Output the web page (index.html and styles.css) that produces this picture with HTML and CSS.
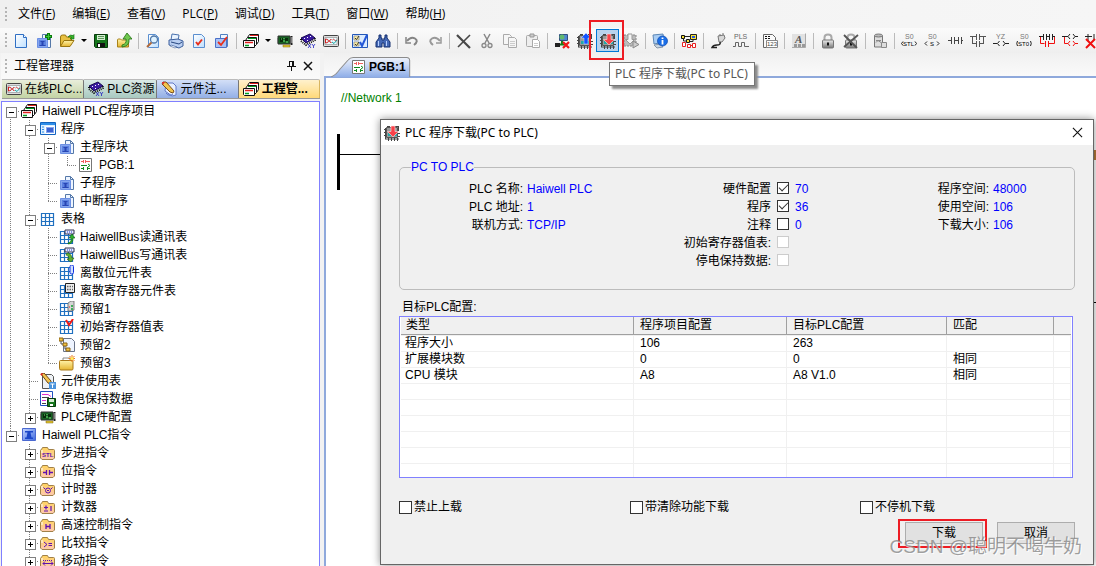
FILE: index.html
```html
<!DOCTYPE html>
<html lang="zh-CN">
<head>
<meta charset="utf-8">
<title>PLC 程序下载</title>
<link rel="stylesheet" href="styles.css">
</head>
<body>
<svg class="defs" aria-hidden="true">
  <defs>
    <linearGradient id="gBlue" x1="0" y1="0" x2="1" y2="1"><stop offset="0" stop-color="#c4d6ff"/><stop offset="1" stop-color="#3f6ae0"/></linearGradient>
    <linearGradient id="gPage" x1="0" y1="0" x2="1" y2="1"><stop offset="0" stop-color="#fff"/><stop offset="1" stop-color="#bfe0ff"/></linearGradient>
    <linearGradient id="gFold" x1="0" y1="0" x2="0" y2="1"><stop offset="0" stop-color="#fff3a8"/><stop offset="1" stop-color="#e5b530"/></linearGradient>
    <linearGradient id="gDir" x1="0" y1="0" x2="0" y2="1"><stop offset="0" stop-color="#ffd45e"/><stop offset="1" stop-color="#ffc9b0"/></linearGradient>
    <linearGradient id="gGray" x1="0" y1="0" x2="0" y2="1"><stop offset="0" stop-color="#eee"/><stop offset="1" stop-color="#777"/></linearGradient>
  </defs>
  <symbol id="new" viewBox="0 0 16 16"><path d="M2.500 1.500h8l3 3v10h-11z" fill="url(#gPage)" stroke="#2f6fc4"/><path d="M10.500 1.500v3h3" fill="#fff" stroke="#2f6fc4"/></symbol>
  <symbol id="blk" viewBox="0 0 16 16"><path d="M6.500 1.500h5l3 3v10h-8z" fill="#eef5ff" stroke="#5578a8"/><path d="M11.500 1.500v3h3" fill="none" stroke="#5578a8"/><path d="M1.500 5.500h10v9h-10z" fill="#86a6ee" stroke="#6c90e4"/><path d="M3 7h7v6H3z" fill="#5c82e0"/><path d="M4.500 8h4v1h-1v3h2v1h-6v-1h2V9h-1z" fill="#2846b4"/></symbol>
  <symbol id="blkadd" viewBox="0 0 16 16"><use href="#blk"/><path d="M12.500 0v7M9 3.500h7" stroke="#0a7a0a" stroke-width="3"/><path d="M12.500 1v5M10 3.500h5" stroke="#38c838"/></symbol>
  <symbol id="open" viewBox="0 0 16 16"><path d="M1.500 13V4q0-2 2-2h3l1 2h5v3" fill="#e8c040" stroke="#9a7610"/><path d="M1.500 13.500L5 7.500h10l-4 6z" fill="url(#gFold)" stroke="#9a7610"/><path d="M9 4q2-3 5-1.500l1-1V6h-4l1.500-1.500Q11 3.500 9 4z" fill="#36b52c" stroke="#12680c" stroke-width=".6"/></symbol>
  <symbol id="save" viewBox="0 0 16 16"><path d="M1.500 1.500h13v13h-12l-1-1z" fill="#16761c" stroke="#073a0b"/><path d="M4 2h8v5H4z" fill="#d6ecd4"/><path d="M5 3.500h6M5 5.500h6" stroke="#5a9a58"/><path d="M4 10h8v4H4z" fill="#111"/><path d="M5 11h2v3H5z" fill="#fff"/></symbol>
  <symbol id="export" viewBox="0 0 16 16"><path d="M1.500 14V7q0-1 1-1h2l1 1h7v7z" fill="url(#gFold)" stroke="#a98218"/><path d="M6 12q5-1 4-6H7l4-6 5 6h-3q1 7-7 8z" fill="#70c850" stroke="#217010" stroke-width=".8"/></symbol>
  <symbol id="preview" viewBox="0 0 16 16"><path d="M3.500 1.500h7l3 3v10h-10z" fill="url(#gPage)" stroke="#5a8fd0"/><circle cx="9" cy="6.500" r="3.500" fill="#dff2ff" stroke="#5078a8" stroke-width="1.300"/><path d="M6.500 9.500L2 14" stroke="#b06a3a" stroke-width="2"/></symbol>
  <symbol id="print" viewBox="0 0 16 16"><path d="M4 1l7 1-1 6-7-1z" fill="#eaf4ff" stroke="#4a72ae"/><path d="M1 7l9-1 5 2v5l-4 2-10-3z" fill="#b9cff2" stroke="#3c5f9c"/><path d="M3 9l8 2 3-2" fill="none" stroke="#27467e"/><path d="M3 12l6 2-2 1-5-2z" fill="#fff" stroke="#3c5f9c" stroke-width=".6"/></symbol>
  <symbol id="chk" viewBox="0 0 16 16"><path d="M2.500 1.500h8l3 3v10h-11z" fill="url(#gPage)" stroke="#5a8fd0"/><path d="M5 9l2 2.500L11 6.500" fill="none" stroke="#e8301c" stroke-width="2"/></symbol>
  <symbol id="chkblk" viewBox="0 0 16 16"><path d="M6.500 1.500h7v12h-7z" fill="#eef5ff" stroke="#5080c0"/><path d="M1.500 5.500h11v9h-11z" fill="#a9c1f5" stroke="#4a70c8"/><path d="M4 9l3 3 6-8" fill="none" stroke="#e8301c" stroke-width="1.800"/></symbol>
  <symbol id="stack" viewBox="0 0 16 16"><path d="M4.500 4.500l2-3h9v7l-2 3z" fill="#fff" stroke="#111"/><path d="M7 2.500h8" stroke="#e02020"/><path d="M2.500 7.500l2-3h9v7l-2 2z" fill="#fff" stroke="#111"/><path d="M5 5.500h8" stroke="#00a020"/><path d="M.5 7.500h11v7h-10l-1-1z" fill="#fff" stroke="#111"/><path d="M2 9.500h8" stroke="#e02020" stroke-width="1.500"/><path d="M2 12.500h4" stroke="#00a020" stroke-width="1.500"/></symbol>
  <symbol id="card" viewBox="0 0 16 16"><path d="M1 3h12v8H1z" fill="#176022" stroke="#333"/><path d="M3 5h3v4H3zM8 5h3v3H8z" fill="#082c0c"/><path d="M4 6h1M6 8h2M9 9h2M7 5v1" stroke="#6fe070"/><path d="M14.500 3v9" stroke="#222" stroke-width="2"/><path d="M15 4v6" stroke="#ddd"/><path d="M6 12h7v2H6z" fill="#e4c830" stroke="#806a10" stroke-width=".5"/><path d="M0 5v5" stroke="#777" stroke-width="2"/></symbol>
  <symbol id="chip" viewBox="0 0 16 16"><path d="M1 5l9-4 5 4-9 5z" fill="#3a1aa0" stroke="#160850"/><path d="M1 6v2l5 4 9-5V5" fill="none" stroke="#111" stroke-width="2" stroke-dasharray="1 1"/><path d="M4 5l1 1M7 4l1 1M10 3l1 1M7 7l1 1" stroke="#fff"/><path d="M8 11l3 4M11 11l-3 4M12 11l1.500 2L15 11M13.500 13v2" fill="none" stroke="#2020c0" stroke-width=".8"/></symbol>
  <symbol id="dcv" viewBox="0 0 16 16"><rect x=".5" y="2.500" width="15" height="11" rx="1" fill="#ddd" stroke="#444"/><path d="M2 4.500h12v7H2z" fill="#eafcff" stroke="#888" stroke-width=".6"/><path d="M2.500 6v4q3 0 3-2t-3-2M8.500 6.500q-2 0-2 1.500t2 1.500M9.500 7q1-1.500 2 0t2.500 0" fill="none" stroke="#d02020"/><path d="M9 9l2 1.500L14 7" fill="none" stroke="#15a0a0"/></symbol>
  <symbol id="opts" viewBox="0 0 16 16"><path d="M.5 1.500h15v13H.5z" fill="#dcecff" stroke="#2458b8"/><path d="M2 3h5v4H2zM2 9h5v4H2z" fill="#fff0a0" stroke="#888" stroke-width=".7"/><path d="M3 5l1.500 1.500L7 3M3 11l1.500 1.500L7 9" fill="none" stroke="#333"/><path d="M8 9l2 4 5-11" fill="none" stroke="#2458d8" stroke-width="2"/></symbol>
  <symbol id="bino" viewBox="0 0 16 16"><path d="M4 2h2v3h1v2h2V5h1V2h2v3l3 4v5H9v-4H7v4H1V9l3-4z" fill="#4468b4" stroke="#173070"/><path d="M3.500 8v5M11.500 8v5" stroke="#b8d0ff"/></symbol>
  <symbol id="undo" viewBox="0 0 16 16"><path d="M3 8Q7 3 11 5.500t-1 6.500" fill="none" stroke="#858585" stroke-width="2"/><path d="M2 4v6h5" fill="none" stroke="#858585" stroke-width="1.500"/></symbol>
  <symbol id="redo" viewBox="0 0 16 16"><path d="M13 8Q9 3 5 5.500T6 12" fill="none" stroke="#999" stroke-width="2"/><path d="M14 4v6H9" fill="none" stroke="#999" stroke-width="1.500"/></symbol>
  <symbol id="del" viewBox="0 0 16 16"><path d="M1 2l13 13" stroke="#484848" stroke-width="2.200"/><path d="M14 2L2 14" stroke="#484848" stroke-width="1.600"/></symbol>
  <symbol id="cut" viewBox="0 0 16 16"><path d="M5 1l5 9M11 1L6 10" stroke="#888" stroke-width="1.500"/><circle cx="5" cy="12.500" r="2" fill="none" stroke="#888" stroke-width="1.300"/><circle cx="11" cy="12.500" r="2" fill="none" stroke="#888" stroke-width="1.300"/></symbol>
  <symbol id="copy" viewBox="0 0 16 16"><path d="M1.500 1.500h6l2 2v8h-8z" fill="#f6f6f6" stroke="#aaa"/><path d="M6.500 4.500h6l2 2v8h-8z" fill="#f6f6f6" stroke="#aaa"/><path d="M8 8.500h5M8 10.500h5M8 12.500h5" stroke="#ccc"/></symbol>
  <symbol id="paste" viewBox="0 0 16 16"><rect x="1.500" y="2.500" width="11" height="11" rx="1" fill="#eee" stroke="#aaa"/><path d="M5 1h4v3H5z" fill="#ccc" stroke="#999"/><path d="M7.500 6.500h5l2 2v6h-7z" fill="#fff" stroke="#aaa"/><path d="M9 10.500h4M9 12.500h4" stroke="#ccc"/></symbol>
  <symbol id="net" viewBox="0 0 16 16"><path d="M5.500 1.500h8v6h-8z" fill="#4f87d0" stroke="#315080"/><circle cx="8" cy="4" r="2.500" fill="#61b970"/><path d="M8 8v3M3 11.500h10" stroke="#168018" stroke-width="2"/><path d="M1 10h5v4H1z" fill="#222"/><path d="M9 9l6 6M15 9l-6 6" stroke="#f01818" stroke-width="2.200"/></symbol>
  <symbol id="plc" viewBox="0 0 16 16"><path d="M2.500 2.500h11v10h-11z" fill="#9a9a9a" stroke="#555"/><path d="M1.500 3v11M0 4.500h2M0 7.500h2M0 10.500h2M1 14h14" stroke="#444"/><path d="M3 1.500h3M11 1.500h4M14.500 1v5M14 8.500h2M14 11.500h2M4.500 13v3M7.500 13v3M10.500 13v3M13.500 13v3" stroke="#444"/><path d="M4 8h9v3H4z" fill="#20a8a8"/></symbol>
  <symbol id="up" viewBox="0 0 16 16"><use href="#plc"/><path d="M9 0l5 5h-3v6H7V5H4z" fill="#1455ff" stroke="#dce6ff" stroke-width=".5"/></symbol>
  <symbol id="down" viewBox="0 0 16 16"><use href="#plc"/><path d="M9 12L3.500 6.500H7V1h4v5.500h3.500z" fill="#fa4048" stroke="#ffe0e0" stroke-width=".6"/></symbol>
  <symbol id="downg" viewBox="0 0 16 16"><path d="M1 2h12v11H1z" fill="#bbb" stroke="#888" stroke-dasharray="2 1"/><path d="M7 11L2.500 6.500H5V1h4v5.500h2.500z" fill="#f4f4f4" stroke="#999"/><path d="M10 8l6 3.500-6 3.500z" fill="#ccc" stroke="#888"/></symbol>
  <symbol id="info" viewBox="0 0 16 16"><path d="M1 2l10-1 1 8-10 2z" fill="#a9cdf3" stroke="#5d87b5"/><path d="M2 12l7-1 2 3-6 1z" fill="#c9d6e2" stroke="#8696a8"/><circle cx="10.500" cy="8" r="5" fill="#1b6fe8" stroke="#0d48ac" stroke-width=".7"/><path d="M10.500 4.500v1.500M10.500 7v4.500" stroke="#fff" stroke-width="1.800"/></symbol>
  <symbol id="nodes" viewBox="0 0 16 16"><path d="M.5 2.500h3v3h-3zM5.500 6.500h3v3h-3z" fill="#f6e236" stroke="#111"/><path d="M9.500 1.500h6v5h-6z" fill="#f6e236" stroke="#222"/><path d="M11 3h3v2h-3z" fill="#2858e8"/><path d="M2.500 5v3H6M4 3.500h5M9 8.500h3v-2" fill="none" stroke="#222"/><path d="M1.500 9.500h3v4h-3zM6.500 11.500h3v3h-3zM11.500 10.500h3v4h-3z" fill="#fff" stroke="#e82020"/><path d="M9 12.500h3" stroke="#e82020"/></symbol>
  <symbol id="plug" viewBox="0 0 16 16"><path d="M8 3l6-1 1 3-3 4H9z" fill="#d8d8d8" stroke="#777"/><path d="M10 1v2M13 0v2" stroke="#777"/><path d="M10 9q1 3-3 3T2 14.500h5" fill="none" stroke="#222" stroke-width="1.500"/></symbol>
  <symbol id="lock" viewBox="0 0 16 16"><path d="M4.500 8V4.500q0-3 3.500-3t3.500 3V8" fill="none" stroke="#aaa" stroke-width="2"/><rect x="2.500" y="7" width="11" height="8" rx="1" fill="url(#gGray)" stroke="#777"/><path d="M8 9.500v3" stroke="#111" stroke-width="2"/></symbol>
  <symbol id="unlock" viewBox="0 0 16 16"><use href="#lock"/><path d="M1 2l13 13M15 2L1 14" stroke="#555" stroke-width="1.800"/></symbol>
  <symbol id="db" viewBox="0 0 16 16"><path d="M2.500 3v11h8V3z" fill="#ddd" stroke="#777"/><ellipse cx="6.500" cy="2.500" rx="4" ry="1.500" fill="#bbb" stroke="#777"/><path d="M4 7.500h5M4 9.500l2-2 3 2" fill="none" stroke="#888"/><path d="M9.500 9.500h5v5h-5z" fill="#ddd" stroke="#888"/></symbol>
  <symbol id="con" viewBox="0 0 16 16"><path d="M1 7.500h3M4.500 4v7M7.500 4v7M8 7.500h3M11.500 4v7M14.500 4v7M15 7.500h1" stroke="#444"/></symbol>
  <symbol id="par" viewBox="0 0 16 16"><path d="M0 3.500h6M6.500 1v6M9.500 1v6M10 3.500h6M2.500 4v6M13.500 4v6M2 10.500h4M6.500 8v6M9.500 8v6M10 10.500h4" stroke="#555"/></symbol>
  <symbol id="parred" viewBox="0 0 16 16"><path d="M0 3.500h4M4.500 1v6M7.500 1v6M7.500 3.500h3M10.500 1v6M13.500 1v6M14 3.500h2" stroke="#222"/><path d="M1.500 4v6.500h4M6.500 8v6M9.500 8v6M10 10.500h5.500V4" fill="none" stroke="#f01010"/></symbol>
  <symbol id="coilred" viewBox="0 0 16 16"><path d="M0 3.500h6M8 1L6 3.500 8 6M11 1l2 2.500L11 6M13 3.500h3" fill="none" stroke="#222"/><path d="M2.500 4v6.500H6M8 8l-2 2.500L8 13M11 8l2 2.500-2 2.500M13 10.500h3" fill="none" stroke="#f01010"/></symbol>
  <symbol id="delred" viewBox="0 0 16 16"><path d="M0 3.500h7M3 1v7M9 1v6" stroke="#222"/><path d="M1 6l9 9M10 6l-9 9" stroke="#f01010" stroke-width="2"/></symbol>
  <symbol id="pencil" viewBox="0 0 16 16"><path d="M5 2h7l3 3v9l-4 1-7-5z" fill="#e8efff" stroke="#6078c8"/><path d="M2 1l3 0 8 9-1 2-3-1-8-8z" fill="#f1c550" stroke="#7a4d16"/><path d="M1 1l3 0-2 3z" fill="#e03030"/><path d="M5 12q3 4 7 1" fill="none" stroke="#6078c8"/></symbol>
  <symbol id="ladder" viewBox="0 0 16 16"><path d="M1.500 1.500h12v13h-12z" fill="#fff" stroke="#777"/><path d="M3 4.500h2M5.500 3v3M7.500 3v3M8 4.500h4" stroke="#f06060"/><path d="M3 8.500h6M10 7l2 1.500-2 1.500M3 11.500h2M5.500 10v3M9.500 10v3M10 11.500h2" fill="none" stroke="#108a20"/></symbol>
  <symbol id="prog" viewBox="0 0 16 16"><path d="M.5 1.500h15v12H.5z" fill="#dcefff" stroke="#1264c0"/><path d="M1 2h14v2H1z" fill="#2f8ee8"/><path d="M2 6h2M2 8.500h2M2 11h2" stroke="#2f8ee8"/><path d="M5.500 5.500h9v7h-9z" fill="#86a6ee" stroke="#fff"/><path d="M7 7h6v4H7z" fill="#3b62d0"/></symbol>
  <symbol id="grid" viewBox="0 0 16 16"><path d="M1.500 2.500h12v12h-12zM1.500 6.500h12M1.500 10.500h12M5.500 2.500v12M9.500 2.500v12" fill="#fff" stroke="#2070c0" stroke-width="1.200"/></symbol>
  <symbol id="gread" viewBox="0 0 16 16"><use href="#grid"/><path d="M6 1h9v4H6z" fill="#e8ecff" stroke="#303050"/><path d="M8 3h6" stroke="#2030d0" stroke-dasharray="1 1"/><path d="M9 14q4-1 3-5h-2l3-4 3 4h-2q0 6-5 6z" fill="#30b030" stroke="#0c600c" stroke-width=".6"/></symbol>
  <symbol id="gwrite" viewBox="0 0 16 16"><use href="#grid"/><path d="M6 1h9v4H6z" fill="#e8ecff" stroke="#303050"/><path d="M8 3h6" stroke="#2030d0" stroke-dasharray="1 1"/><path d="M8 6q4 0 5 5h2l-3 4-4-3h2q0-4-3-4z" fill="#60b030" stroke="#2c600c" stroke-width=".6"/></symbol>
  <symbol id="gbit" viewBox="0 0 16 16"><use href="#grid"/><rect x="11" y="0" width="3.500" height="9" rx="1.500" fill="#cfe0ff" stroke="#1030e0"/></symbol>
  <symbol id="greg" viewBox="0 0 16 16"><use href="#grid"/><path d="M6.500.500h9v9h-9z" fill="#eee" stroke="#222"/><path d="M8 3.500h6M8 6.500h6" stroke="#666" stroke-width="1.500" stroke-dasharray="1.500 1"/></symbol>
  <symbol id="gres" viewBox="0 0 16 16"><use href="#grid"/><path d="M9 2l3-2h3v9l-3 1H9z" fill="#d5d5d5" stroke="#666" stroke-width=".8"/><path d="M13 4v2M13 7v2" stroke="#10a030" stroke-width="1.500"/><path d="M10 6h1" stroke="#e02020"/></symbol>
  <symbol id="ginit" viewBox="0 0 16 16"><use href="#grid"/><path d="M7 1l3 5 4-6" fill="none" stroke="#f01818" stroke-width="2"/></symbol>
  <symbol id="hier" viewBox="0 0 16 16"><path d="M4.500 1.500h8l3 3v10h-11z" fill="#eef4ff" stroke="#6a7488"/><path d="M0 1h4v3H0zM4 6h4v3H4zM7 11h4v3H7z" fill="#f3c443" stroke="#8a6212"/><path d="M2 4v3h2M6 9v3h1" fill="none" stroke="#555"/></symbol>
  <symbol id="resv" viewBox="0 0 16 16"><path d="M4 3h7v4H4z" fill="#fff" stroke="#888"/><path d="M.5 6.500q0-1 1-1H13q1 0 1 1v7q0 1.500-1 1.500H2q-1.500 0-1.500-1.500z" fill="url(#gFold)" stroke="#a87818"/><path d="M13 0v7M9.500 3.500h6.500M10.500 1l5 5M15.500 1l-5 5" stroke="#f07818"/><circle cx="13" cy="3.500" r="1.500" fill="#fff060"/></symbol>
  <symbol id="usage" viewBox="0 0 16 16"><path d="M2.500 1.500h9l2 2v12h-11z" fill="#eef2f6" stroke="#555"/><path d="M1 1l3-1 7 8v3L8 10z" fill="#f1c550" stroke="#704510"/><path d="M0 1l3-1-1 3z" fill="#e02020"/><path d="M9 9h7v7H9z" fill="#4c94dc"/><path d="M10.500 11h4M12.500 11v4" stroke="#fff"/></symbol>
  <symbol id="keep" viewBox="0 0 16 16"><path d="M.5.500h12v14H.5z" fill="#fff" stroke="#2050c0"/><path d="M2 3.500h6l3 2M2 9.500h4" fill="none" stroke="#e030d0"/><path d="M2 6.500h7M2 12.500h4" stroke="#444"/><path d="M7.500 7.500h8v8h-8z" fill="#16761c" stroke="#073a0b"/><path d="M9 8h5v3H9z" fill="#d6ecd4"/><path d="M10 13h3v2h-3z" fill="#fff"/></symbol>
  <symbol id="inst" viewBox="0 0 16 16"><path d="M1.500 1.500h13v12h-13z" fill="url(#gBlue)" stroke="#4a68d0"/><path d="M4 4h8v1.500h-2.500l1 5H12V12H4v-1.500h1.500l1-5H4z" fill="#1b46c8"/></symbol>
  <symbol id="dir" viewBox="0 0 16 16"><path d="M.5 13V5.500q0-1 1-1l1-2h5l1 2h5q1 0 1 1V13l-1.500 1.500h-11z" fill="url(#gDir)" stroke="#a08048"/><path d="M2 5v3" stroke="#fff"/></symbol>
  <symbol id="dbit" viewBox="0 0 16 16"><use href="#dir"/><path d="M3 9.500h3M6.500 7v5M9.500 7v5M10 9.500h3" stroke="#6010b0" stroke-width="1.300"/></symbol>
  <symbol id="dtim" viewBox="0 0 16 16"><use href="#dir"/><path d="M3.500 6.500L5 8M12.500 6.500L11 8" stroke="#6010b0"/><circle cx="8" cy="9.500" r="2.500" fill="none" stroke="#6010b0"/><path d="M7 9l1 1 1-1" fill="none" stroke="#6010b0"/></symbol>
  <symbol id="dcnt" viewBox="0 0 16 16"><use href="#dir"/><path d="M4 8.500h4M6 6.500v4M4 12h4M11 7v5" stroke="#6010b0" stroke-width="1.200"/></symbol>
  <symbol id="dhs" viewBox="0 0 16 16"><use href="#dir"/><path d="M6 7v5M10 7v5M6 9.500h4" stroke="#6010b0" stroke-width="1.300"/></symbol>
  <symbol id="dcmp" viewBox="0 0 16 16"><use href="#dir"/><path d="M4 7l3 2.500L4 12M8.500 8.500H12M8.500 10.500H12" fill="none" stroke="#6010b0"/></symbol>
  <symbol id="dmov" viewBox="0 0 16 16"><use href="#dir"/><path d="M3 7.500h10" stroke="#6010b0" stroke-dasharray="1 1"/><path d="M3 10.500h10M5 8.500l-2 2 2 2M11 8.500l2 2-2 2" fill="none" stroke="#6010b0"/></symbol>
</svg>

<div class="app">
  <nav class="menubar">
    <span class="grip"></span>
    <button>文件(<u>F</u>)</button>
    <button>编辑(<u>E</u>)</button>
    <button>查看(<u>V</u>)</button>
    <button>PLC(<u>P</u>)</button>
    <button>调试(<u>D</u>)</button>
    <button>工具(<u>T</u>)</button>
    <button>窗口(<u>W</u>)</button>
    <button>帮助(<u>H</u>)</button>
  </nav>

  <div class="toolbar" role="toolbar">
    <span class="grip"></span>
    <button aria-label="新建"><svg><use href="#new"/></svg></button>
    <button aria-label="新建程序块"><svg><use href="#blkadd"/></svg></button>
    <button aria-label="打开"><svg><use href="#open"/></svg></button>
    <button class="drop" aria-label="最近文件"></button>
    <button aria-label="保存"><svg><use href="#save"/></svg></button>
    <button aria-label="导出"><svg><use href="#export"/></svg></button>
    <span class="sep"></span>
    <button aria-label="预览"><svg><use href="#preview"/></svg></button>
    <button aria-label="打印"><svg><use href="#print"/></svg></button>
    <button aria-label="检查"><svg><use href="#chk"/></svg></button>
    <button aria-label="检查程序块"><svg><use href="#chkblk"/></svg></button>
    <span class="sep"></span>
    <button aria-label="项目"><svg><use href="#stack"/></svg></button>
    <button class="drop" aria-label="项目列表"></button>
    <button aria-label="硬件配置"><svg><use href="#card"/></svg></button>
    <button aria-label="PLC资源"><svg><use href="#chip"/></svg></button>
    <button aria-label="在线PLC"><svg><use href="#dcv"/></svg></button>
    <span class="sep"></span>
    <button aria-label="选项"><svg><use href="#opts"/></svg></button>
    <button aria-label="查找"><svg><use href="#bino"/></svg></button>
    <span class="sep"></span>
    <button aria-label="撤销"><svg><use href="#undo"/></svg></button>
    <button aria-label="重做"><svg><use href="#redo"/></svg></button>
    <span class="sep"></span>
    <button aria-label="删除"><svg><use href="#del"/></svg></button>
    <button aria-label="剪切"><svg><use href="#cut"/></svg></button>
    <button aria-label="复制"><svg><use href="#copy"/></svg></button>
    <button aria-label="粘贴"><svg><use href="#paste"/></svg></button>
    <span class="sep"></span>
    <button aria-label="联机"><svg><use href="#net"/></svg></button>
    <button aria-label="上载"><svg><use href="#up"/></svg></button>
    <button class="hot" aria-label="PLC 程序下载"><svg><use href="#down"/></svg>
      <span class="mark"></span></button>
    <button aria-label="运行"><svg><use href="#downg"/></svg></button>
    <span class="sep"></span>
    <button aria-label="信息"><svg><use href="#info"/></svg></button>
    <span class="sep"></span>
    <button aria-label="网络"><svg><use href="#nodes"/></svg></button>
    <span class="sep"></span>
    <button aria-label="仿真"><svg><use href="#plug"/></svg></button>
    <button aria-label="脉冲"><svg viewBox="0 0 16 16"><text x="1" y="6" font-size="7" fill="#666">PLS</text><path d="M0 13.500h2.500v-4h3v4h3v-4h3v4H16" fill="none" stroke="#666"/></svg></button>
    <span class="sep"></span>
    <button aria-label="数据"><svg viewBox="0 0 16 16"><path d="M1.500 1.500h9l3 3v10h-12z" fill="#fafafa" stroke="#666"/><path d="M3 3.500h6M3 5.500h6" stroke="#111" stroke-dasharray="2 1"/><path d="M4.500 7.500h11v7h-11z" fill="#fff" stroke="#888"/><text x="5" y="13" font-size="6" fill="#444">123</text></svg></button>
    <span class="sep"></span>
    <button aria-label="字体"><svg viewBox="0 0 16 16"><path d="M1 1h14v14H1z" fill="#e2e2e2"/><path d="M1 14.500h13.500v-14" fill="none" stroke="#aaa"/><text x="4" y="10" font-size="11" font-style="italic" font-weight="bold" fill="#555" class="ser">A</text><path d="M3 12.500h11" stroke="#999" stroke-width="3" stroke-dasharray="3 1"/></svg></button>
    <span class="sep"></span>
    <button aria-label="锁定"><svg><use href="#lock"/></svg></button>
    <button aria-label="解锁"><svg><use href="#unlock"/></svg></button>
    <span class="sep"></span>
    <button aria-label="数据库"><svg><use href="#db"/></svg></button>
    <span class="sep"></span>
    <button aria-label="步进"><svg viewBox="0 0 16 16"><text x="4" y="6" font-size="7" fill="#777">S0</text><text x="2" y="13" font-size="6">STL</text><path d="M2 8.500L.5 10.500 2 12.500M14 8.500l1.500 2-1.500 2" fill="none" stroke="#222"/></svg></button>
    <button aria-label="置位"><svg viewBox="0 0 16 16"><text x="4" y="6" font-size="7" fill="#777">S0</text><text x="6" y="13" font-size="6">S</text><path d="M3 8.500L1 10.500l2 2M13 8.500l2 2-2 2" fill="none" stroke="#222"/></svg></button>
    <button aria-label="触点"><svg><use href="#con"/></svg></button>
    <button aria-label="并联"><svg><use href="#par"/></svg></button>
    <button aria-label="线圈"><svg viewBox="0 0 16 16"><text x="3" y="6" font-size="7" fill="#777">YZ</text><path d="M0 10.500h4M6.500 8l-2 2.500 2 2.500M10 8l2 2.500-2 2.500M12 10.500h4" fill="none" stroke="#222"/></svg></button>
    <button aria-label="停止"><svg viewBox="0 0 16 16"><text x="4" y="6" font-size="7" fill="#777">S0</text><text x="2" y="13" font-size="6">ST0</text><path d="M1.500 8q-1.500 2.500 0 5M14.500 8q1.500 2.500 0 5" fill="none" stroke="#222"/></svg></button>
    <button aria-label="并联块"><svg><use href="#parred"/></svg></button>
    <button aria-label="并联输出"><svg><use href="#coilred"/></svg></button>
    <button aria-label="删除行"><svg><use href="#delred"/></svg></button>
  </div>

  <div class="main">
    <aside class="side">
      <header class="side-head">
        <span class="grip"></span>
        <span class="side-title">工程管理器</span>
        <button aria-label="固定"><svg viewBox="0 0 10 10"><path d="M2 .500h5M2.500 0v5M5.500 0v5M6.500 0v5M0 5.500h9M4.500 6v4" stroke="#111" fill="none"/></svg></button>
        <button aria-label="关闭"><svg viewBox="0 0 10 10"><path d="M1 1l8 8M9 1L1 9" stroke="#111" stroke-width="1.500"/></svg></button>
      </header>
      <div class="tabs">
        <button class="t1"><svg><use href="#dcv"/></svg>在线PLC...</button>
        <button class="t2"><svg><use href="#chip"/></svg>PLC资源</button>
        <button class="t3"><svg><use href="#pencil"/></svg>元件注...</button>
        <button class="t4"><svg><use href="#stack"/></svg>工程管...</button>
      </div>
      <div class="tree">
        <ul>
          <li><div class="row open"><svg><use href="#stack"/></svg>Haiwell PLC程序项目</div>
            <ul>
              <li><div class="row open"><svg><use href="#prog"/></svg>程序</div>
                <ul>
                  <li><div class="row open"><svg><use href="#blk"/></svg>主程序块</div>
                    <ul><li><div class="row"><svg><use href="#ladder"/></svg>PGB:1</div></li></ul>
                  </li>
                  <li><div class="row"><svg><use href="#blk"/></svg>子程序</div></li>
                  <li><div class="row"><svg><use href="#blk"/></svg>中断程序</div></li>
                </ul>
              </li>
              <li><div class="row open"><svg><use href="#grid"/></svg>表格</div>
                <ul>
                  <li><div class="row"><svg><use href="#gread"/></svg>HaiwellBus读通讯表</div></li>
                  <li><div class="row"><svg><use href="#gwrite"/></svg>HaiwellBus写通讯表</div></li>
                  <li><div class="row"><svg><use href="#gbit"/></svg>离散位元件表</div></li>
                  <li><div class="row"><svg><use href="#greg"/></svg>离散寄存器元件表</div></li>
                  <li><div class="row"><svg><use href="#gres"/></svg>预留1</div></li>
                  <li><div class="row"><svg><use href="#ginit"/></svg>初始寄存器值表</div></li>
                  <li><div class="row"><svg><use href="#hier"/></svg>预留2</div></li>
                  <li><div class="row"><svg><use href="#resv"/></svg>预留3</div></li>
                </ul>
              </li>
              <li><div class="row"><svg><use href="#usage"/></svg>元件使用表</div></li>
              <li><div class="row"><svg><use href="#keep"/></svg>停电保持数据</div></li>
              <li><div class="row shut"><svg><use href="#card"/></svg>PLC硬件配置</div></li>
            </ul>
          </li>
          <li><div class="row open"><svg><use href="#inst"/></svg>Haiwell PLC指令</div>
            <ul>
              <li><div class="row shut"><svg viewBox="0 0 16 16"><use href="#dir"/><text x="2" y="12" font-size="6" font-weight="bold" fill="#6010b0">STL</text></svg>步进指令</div></li>
              <li><div class="row shut"><svg><use href="#dbit"/></svg>位指令</div></li>
              <li><div class="row shut"><svg><use href="#dtim"/></svg>计时器</div></li>
              <li><div class="row shut"><svg><use href="#dcnt"/></svg>计数器</div></li>
              <li><div class="row shut"><svg><use href="#dhs"/></svg>高速控制指令</div></li>
              <li><div class="row shut"><svg><use href="#dcmp"/></svg>比较指令</div></li>
              <li><div class="row shut"><svg><use href="#dmov"/></svg>移动指令</div></li>
            </ul>
          </li>
        </ul>
      </div>
    </aside>

    <section class="editor">
      <div class="doc-tabs">
        <button class="doc-tab">
          <svg class="tab-shape" viewBox="0 0 79 20" preserveAspectRatio="none"><defs><linearGradient id="gTab" x1="0" y1="0" x2="0" y2="1"><stop offset="0" stop-color="#f0f4fc"/><stop offset="1" stop-color="#8faee8"/></linearGradient></defs><path d="M0 20Q5 18 9 12L17 3q2-2.500 5-2.500H75q3 0 3 3V20" fill="url(#gTab)" stroke="#8c8c8c"/></svg>
          <svg class="tab-icon"><use href="#ladder"/></svg><span>PGB:1</span>
        </button>
      </div>
      <div class="canvas">
        <p class="comment">//Network 1</p>
        <div class="rung"><span class="rail"></span><span class="wire"></span><span class="coil"></span></div>
        <div class="rung tail"><span class="stub"></span></div>
      </div>
    </section>
  </div>

  <div class="tooltip" role="tooltip">PLC 程序下载(PC to PLC)</div>

  <form class="dialog" role="dialog" aria-labelledby="dlg-title">
    <header class="dlg-head">
      <svg><use href="#down"/></svg>
      <span id="dlg-title">PLC 程序下载(PC to PLC)</span>
      <button type="button" aria-label="关闭"><svg viewBox="0 0 12 12"><path d="M1 1l10 10M11 1L1 11" stroke="#111" stroke-width="1.200"/></svg></button>
    </header>
    <div class="dlg-body">
      <fieldset>
        <legend>PC TO PLC</legend>
        <div class="facts">
          <div class="group g1">
            <span>PLC 名称:</span><b>Haiwell PLC</b>
            <span>PLC 地址:</span><b>1</b>
            <span>联机方式:</span><b>TCP/IP</b>
          </div>
          <div class="group g2">
            <label for="c1">硬件配置</label><input id="c1" type="checkbox" checked><b>70</b>
            <label for="c2">程序</label><input id="c2" type="checkbox" checked><b>36</b>
            <label for="c3">注释</label><input id="c3" type="checkbox"><b>0</b>
            <label for="c4">初始寄存器值表:</label><input id="c4" type="checkbox" disabled><b></b>
            <label for="c5">停电保持数据:</label><input id="c5" type="checkbox" disabled><b></b>
          </div>
          <div class="group g3">
            <span>程序空间:</span><b>48000</b>
            <span>使用空间:</span><b>106</b>
            <span>下载大小:</span><b>106</b>
          </div>
        </div>
      </fieldset>
      <div class="cap" id="cap">目标PLC配置:</div>
      <div class="table-box">
        <table aria-labelledby="cap">
          <colgroup><col class="k1"><col class="k2"><col class="k3"><col class="k4"><col></colgroup>
          <thead><tr><th>类型</th><th>程序项目配置</th><th>目标PLC配置</th><th>匹配</th><th></th></tr></thead>
          <tbody>
            <tr><td>程序大小</td><td>106</td><td>263</td><td></td><td></td></tr>
            <tr><td>扩展模块数</td><td>0</td><td>0</td><td>相同</td><td></td></tr>
            <tr><td>CPU 模块</td><td>A8</td><td>A8 V1.0</td><td>相同</td><td></td></tr>
            <tr><td></td><td></td><td></td><td></td><td></td></tr>
            <tr><td></td><td></td><td></td><td></td><td></td></tr>
            <tr><td></td><td></td><td></td><td></td><td></td></tr>
            <tr><td></td><td></td><td></td><td></td><td></td></tr>
            <tr><td></td><td></td><td></td><td></td><td></td></tr>
            <tr><td></td><td></td><td></td><td></td><td></td></tr>
          </tbody>
        </table>
      </div>
      <div class="opts">
        <label><input type="checkbox">禁止上载</label>
        <label><input type="checkbox">带清除功能下载</label>
        <label><input type="checkbox">不停机下载</label>
      </div>
      <div class="actions">
        <button type="button" class="go">下载<span class="mark"></span></button>
        <button type="button">取消</button>
      </div>
    </div>
  </form>
  <div class="watermark">CSDN @聪明不喝牛奶</div>
</div>
</body>
</html>
```

FILE: styles.css
```css
* { box-sizing: border-box; }
body {
  margin: 0;
  font: 12px/18px "Liberation Sans", "Noto Sans CJK SC", sans-serif;
  color: #000;
}
button {
  margin: 0;
  padding: 0;
  border: 0;
  background: none;
  font: inherit;
  color: inherit;
}
svg { width: 16px; height: 16px; flex: none; display: block; }
svg text { font-family: "Liberation Sans", sans-serif; }
svg text.ser { font-family: "Liberation Serif", serif; }
.defs { position: absolute; width: 0; height: 0; }
.app {
  position: relative;
  height: 100vh;
  overflow: hidden;
  display: flex;
  flex-direction: column;
  background: #f2f2f2;
}
.grip {
  width: 2px;
  height: 15px;
  flex: none;
  background: repeating-linear-gradient(#b4b4b4 0 2px, transparent 2px 4px);
}

/* menu and toolbar */
.menubar {
  display: flex;
  align-items: center;
  gap: 17px;
  height: 28px;
  padding-left: 5px;
  background: linear-gradient(90deg, #f0f0f0, #f6f6f6);
  font-family: "Open Sans", "Noto Sans CJK SC", sans-serif;
}
.menubar .grip { margin-right: -6px; }
.toolbar {
  display: flex;
  align-items: center;
  height: 25px;
  padding-left: 5px;
  background: linear-gradient(#fbfbfb, #eee);
}
.toolbar .grip { margin-right: 2px; }
.toolbar button {
  display: flex;
  align-items: center;
  justify-content: center;
  flex: none;
  width: 23px;
  height: 23px;
}
.toolbar .drop { width: 11px; }
.drop::after {
  content: "";
  border: 3px solid transparent;
  border-top-color: #000;
  border-bottom: 0;
}
.sep {
  flex: none;
  width: 6px;
  height: 16px;
  background: linear-gradient(#bbb, #bbb) center / 1px 100% no-repeat;
}
.toolbar .hot {
  position: relative;
  border: 1px solid #0078d7;
  background: #b9d3ee;
}
.mark {
  position: absolute;
  border: 2px solid #ed1c24;
  pointer-events: none;
}
.hot .mark { inset: -10px -6px -9px -8px; }

/* side panel */
.main { flex: 1; display: flex; min-height: 0; }
.side {
  flex: none;
  width: 320px;
  display: flex;
  flex-direction: column;
  padding-left: 1px;
}
.side-head {
  display: flex;
  align-items: center;
  gap: 6px;
  height: 26px;
  padding: 0 7px 0 4px;
  background: linear-gradient(#f4f4f4, #fafafa);
}
.side-head .grip { margin-right: 1px; }
.side-title { flex: 1; font-size: 12px; }
.side-head svg { width: 10px; height: 10px; }
.tabs {
  display: grid;
  grid-template-columns: 82fr 73fr 81fr 81fr;
  height: 20px;
  margin: 0 0 2px 1px;
  border-bottom: 1px solid #999;
}
.tabs button {
  display: flex;
  align-items: center;
  gap: 3px;
  padding-left: 4px;
  border-right: 1px solid #777;
  border-top: 1px solid #bbb;
  border-radius: 0 2px 0 0;
  white-space: nowrap;
  overflow: hidden;
}
.t1 { background: linear-gradient(#e9eedb, #c3d3a4); }
.t2 { background: linear-gradient(#dbeae6, #a8c9c0); }
.t3 { background: linear-gradient(#d3dff7, #93afe6); }
.tabs .t4 { background: linear-gradient(#fff1cd, #ffd979); font-weight: bold; border-right-color: #d8b560; }
.tree {
  flex: 1;
  overflow: hidden;
  background: #fff;
  border: 1px solid #8080ff;
  border-bottom: 0;
}
.tree ul { list-style: none; margin: 0; padding: 0; }
.tree ul ul { margin-left: 19px; }
.tree li { position: relative; }
.tree li::before {
  content: "";
  position: absolute;
  left: 8px;
  top: 0;
  bottom: 0;
  width: 1px;
  background: repeating-linear-gradient(#808080 0 1px, transparent 1px 2px);
}
.tree li:last-child::before { bottom: auto; height: 10px; }
.tree > ul > li:first-child::before { top: 9px; }
.row {
  position: relative;
  display: flex;
  align-items: center;
  gap: 5px;
  height: 18px;
  padding-left: 19px;
  white-space: nowrap;
  background: repeating-linear-gradient(90deg, #808080 0 1px, transparent 1px 2px) 8px 9px / 10px 1px no-repeat;
}
.row.open::before, .row.shut::before {
  content: "";
  position: absolute;
  left: 4px;
  top: 5px;
  width: 9px;
  height: 9px;
  border: 1px solid #808080;
  background: linear-gradient(#000, #000) center / 5px 1px no-repeat, #fff;
}
.row.shut::before {
  background: linear-gradient(#000, #000) center / 5px 1px no-repeat,
    linear-gradient(#000, #000) center / 1px 5px no-repeat, #fff;
}

/* editor */
.editor { flex: 1; display: flex; flex-direction: column; padding-left: 4px; }
.doc-tabs {
  height: 23px;
  padding: 4px 0 0 7px;
  background: linear-gradient(#f0f0f0, #fafafa);
}
.doc-tab {
  position: relative;
  display: flex;
  align-items: center;
  gap: 2px;
  height: 20px;
  padding: 0 5px 0 20px;
  font-weight: bold;
}
.tab-shape { position: absolute; inset: 0; width: 100%; height: 100%; }
.tab-icon, .doc-tab span { position: relative; }
.canvas {
  flex: 1;
  padding: 11px 0 0 11px;
  background: #fff;
  border: 2px solid #8fa9dc;
  border-width: 2px 0 0 2px;
}
.canvas .comment { margin: 0 0 27px 4px; color: #008000; }
.rung { display: flex; height: 56px; }
.rail { width: 3px; background: #000; }
.wire { flex: 1; height: 1px; margin-top: 20px; background: #000; }
.coil { width: 2px; height: 10px; margin-top: 16px; background: #b87838; }
.tail { justify-content: flex-end; margin-top: 92px; }
.stub { width: 2px; height: 1px; margin-top: 20px; background: #000; }

.tooltip {
  position: absolute;
  left: 609px;
  top: 62px;
  padding: 1px 6px 1px 5px;
  border: 1px solid #767676;
  background: #fff;
  color: #575757;
  box-shadow: 3px 3px 2px #8c8c8c;
  line-height: 20px;
  font-family: "Noto Sans", "Noto Sans CJK SC", sans-serif;
}

/* dialog */
.dialog {
  position: absolute;
  left: 380px;
  right: 2px;
  top: 119px;
  background: #f0f0f0;
  border: 1px solid #666;
  box-shadow: 0 0 8px rgba(0, 0, 0, .45);
}
.dlg-head {
  display: flex;
  align-items: center;
  gap: 5px;
  height: 25px;
  padding: 0 10px 0 3px;
  background: #fff;
  font-family: "Noto Sans", "Noto Sans CJK SC", sans-serif;
}
.dlg-head span { flex: 1; }
.dlg-head button svg { width: 11px; height: 11px; }
.dlg-body { padding: 13px 18px 20px; }
fieldset {
  height: 132px;
  margin: 0;
  padding: 4px 0 0;
  border: 1px solid #bcbcbc;
  border-radius: 5px;
}
legend { margin-left: 11px; padding: 0; color: #00f; }
.facts { display: grid; grid-template-columns: 230fr 217fr 227fr; }
.group { display: grid; grid-auto-rows: 18px; align-content: start; align-items: center; }
.group b { font-weight: normal; color: #00f; }
.group span, .group label { text-align: right; }
.g1, .g3 { column-gap: 4px; }
.g1 { grid-template-columns: 123px 1fr; }
.g2 { grid-template-columns: 141px 12px 1fr; column-gap: 6px; }
.g3 { grid-template-columns: 142px 1fr; }
input[type="checkbox"] {
  appearance: none;
  display: grid;
  place-items: center;
  flex: none;
  width: 13px;
  height: 13px;
  margin: 0;
  border: 1px solid #333;
  background: #fff;
}
.group input[type="checkbox"] { width: 12px; height: 12px; margin-bottom: 3px; }
input[type="checkbox"]:disabled { border-color: #ccc; }
input[type="checkbox"]:checked::after {
  content: "";
  width: 8px;
  height: 4px;
  margin-bottom: 2px;
  border: solid #333;
  border-width: 0 0 1px 1px;
  transform: rotate(-45deg);
}
.cap { margin: 8px 0 0 3px; }
.table-box {
  height: 162px;
  margin-right: 2px;
  overflow: hidden;
  padding: 0 1px;
  background: #fff;
  border: 1px solid #8080ff;
}
table { width: 100%; table-layout: fixed; border-collapse: separate; border-spacing: 0; }
.k1 { width: 233px; }
.k2 { width: 153px; }
.k3 { width: 160px; }
.k4 { width: 107px; }
th {
  height: 18px;
  padding: 0 5px;
  text-align: left;
  font-weight: normal;
  line-height: 17px;
  background: #f0f0f0;
  border: solid #a0a0a0;
  border-width: 0 1px 1px 0;
}
th + th { padding-left: 6px; }
th:last-child { border-right: 0; }
td {
  height: 16px;
  padding: 0 4px;
  line-height: 15px;
  border: solid #f0f0f0;
  border-width: 0 1px 1px 0;
}
tbody tr:first-child td { border-top-width: 1px; }
td + td { padding-left: 6px; }
.opts {
  display: grid;
  grid-template-columns: 231fr 230fr 215fr;
  margin-top: 20px;
}
.opts label { display: flex; align-items: center; gap: 2px; }
.actions { display: flex; justify-content: flex-end; gap: 14px; margin-top: 6px; }
.actions button {
  position: relative;
  width: 78px;
  height: 22px;
  background: #e1e1e1;
  border: 1px solid #adadad;
}
.go .mark { inset: -4px -5px -5px -8px; }
.watermark {
  position: absolute;
  right: 14px;
  bottom: 6px;
  font-size: 19px;
  line-height: 26px;
  color: rgba(130, 130, 130, .75);
  text-shadow: 1px 1px 0 rgba(255, 255, 255, .8);
}
```
